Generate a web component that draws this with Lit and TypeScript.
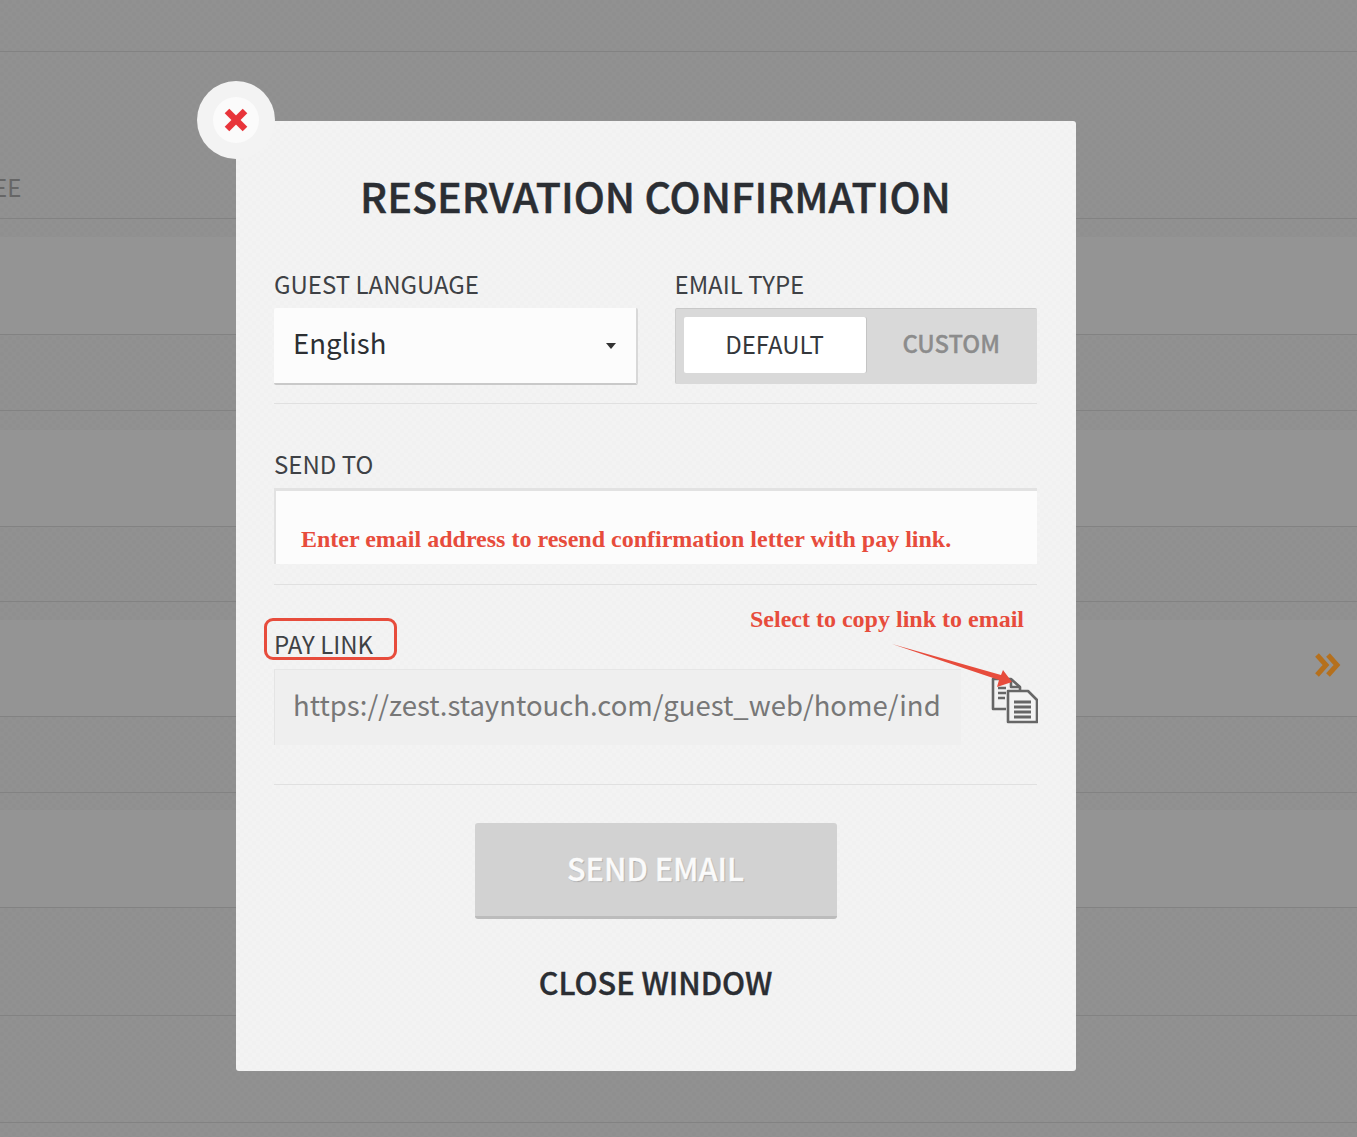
import { LitElement, html, css } from "lit";
import { customElement } from "lit/decorators.js";

const ROWS = [
  { h: 51, gap: 0, band: false, text: "" },
  { h: 166, gap: 0, band: false, text: "EE" },
  { h: 97, gap: 18, band: true, text: "" },
  { h: 75, gap: 0, band: false, text: "" },
  { h: 96, gap: 19, band: true, text: "" },
  { h: 74, gap: 0, band: false, text: "" },
  { h: 96, gap: 18, band: true, text: "", chev: true },
  { h: 75, gap: 0, band: false, text: "" },
  { h: 97, gap: 17, band: true, text: "" },
  { h: 107, gap: 0, band: false, text: "" },
  { h: 106, gap: 0, band: false, text: "" },
];

@customElement("app-root")
export class AppRoot extends LitElement {
  static styles = css`
    :host {
      display: block;
      position: relative;
      height: 1137px;
      overflow: hidden;
      background-color: #919191;
      background-image: radial-gradient(circle at 2px 2px, rgba(0,0,0,0.012) 2px, transparent 2.5px),
        radial-gradient(circle at 6px 6px, rgba(0,0,0,0.012) 2px, transparent 2.5px);
      background-size: 8px 8px;
      font-family: "Noto Sans CJK JP", "Noto Sans", sans-serif;
      color: #34373b;
    }
    .row { border-bottom: 1px solid #828282; position: relative; box-sizing: content-box; }
    .row.band { background: #949494; }
    .gap { display: block; }
    .row-text { position: absolute; left: -7px; top: 117px; font-size: 24px; line-height: 36px; color: #666; }
    .chev { position: absolute; left: 1314px; top: 32px; }
    .modal {
      position: absolute; left: 236px; top: 121px; width: 840px; height: 950px;
      box-sizing: border-box; padding: 0 39px 0 38px;
      background-color: #f3f3f3;
      background-image: radial-gradient(circle at 2px 2px, rgba(0,0,0,0.006) 2px, transparent 2.5px),
        radial-gradient(circle at 6px 6px, rgba(0,0,0,0.006) 2px, transparent 2.5px);
      background-size: 8px 8px;
      border-radius: 3px;
      display: flex; flex-direction: column;
    }
    .close {
      position: absolute; left: -39px; top: -40px; width: 78px; height: 78px; border-radius: 50%;
      background: #f3f3f3; display: flex; align-items: center; justify-content: center;
    }
    .close-in { width: 46px; height: 46px; border-radius: 50%; background: #fbfbfb; display: flex; align-items: center; justify-content: center; }
    h1 {
      margin: 42px 0 0; font-size: 41.3px; line-height: 64px; font-weight: 500; text-align: center; color: #2b2e33;
      font-family: "Noto Sans CJK JP", sans-serif; -webkit-text-stroke: 0.5px #2b2e33;
    }
    .two { display: flex; gap: 38px; margin-top: 40px; padding-bottom: 18px; border-bottom: 1px solid #e0e0e0; }
    .col { flex: 1 1 0; min-width: 0; }
    label { display: block; font-size: 24px; line-height: 34px; color: #3e4145; height: 36px; }
    .select {
      margin: 5px -1px 0 0; height: 77px; box-sizing: border-box; background: #fcfcfc; border-radius: 2px;
      border-bottom: 2px solid #c9c9c9; border-right: 2px solid #d8d8d8;
      display: flex; align-items: center; justify-content: space-between; padding: 0 20px 7px 19px;
      font-size: 27.5px; color: #2c2f33;
    }
    .caret { width: 0; height: 0; border-left: 5.5px solid transparent; border-right: 5.5px solid transparent; border-top: 6px solid #333; margin-top: 8px; }
    .toggle {
      margin-top: 5px; height: 76px; box-sizing: border-box; background: #d9d9d9; border-radius: 2px;
      padding: 8px 0 10px 8px; display: flex; border-top: 1px solid #c8c8c8; border-left: 1px solid #ccc;
    }
    .seg { flex: 0 0 182px; height: 56px; box-sizing: border-box; padding-bottom: 4px; display: flex; align-items: center; justify-content: center; font-size: 24px; border-radius: 2px; }
    .seg.on { background: #fff; color: #34373b; box-shadow: 1px 0 0 #c4c4c4; }
    .seg.off { flex: 1; font-weight: 500; font-size: 23.8px; color: #8c8c8c; padding-right: 0; padding-bottom: 6px; -webkit-text-stroke: 0.3px #8c8c8c; }
    .send { margin-top: 43px; padding-bottom: 20px; border-bottom: 1px solid #e0e0e0; }
    .input {
      margin-top: 5px; height: 76px; box-sizing: border-box; background: #fcfcfc;
      border-top: 3px solid #e2e2e2; border-left: 2px solid #e2e2e2; padding: 23px 0 0 25px;
      font: bold 24px/50px "Liberation Serif", serif; color: #e74c3c;
    }
    .pay { margin-top: 42px; padding-bottom: 39px; border-bottom: 1px solid #e0e0e0; }
    .payrow { display: flex; justify-content: space-between; align-items: flex-start; margin-top: 6px; }
    .link {
      width: 687px; height: 76px; box-sizing: border-box; background: #efefef; border-top: 1px solid #e6e6e6; border-left: 1px solid #e4e4e4;
      padding: 0 21px 0 18px; font-size: 27.5px; line-height: 68px; color: #777; overflow: hidden; white-space: nowrap;
    }
    .link-clip { overflow: hidden; }
    .copy { margin-top: 8px; margin-right: -1px; display: block; }
    .btn {
      align-self: center; margin-top: 38px; width: 362px; height: 96px; box-sizing: border-box;
      background: #d2d2d2; border-radius: 3px; border-bottom: 3px solid #bcbcbc; padding-bottom: 4px;
      display: flex; align-items: center; justify-content: center; font-size: 30.6px; font-weight: 500;
      color: #fafafa; text-shadow: 1px 1px 1px rgba(0,0,0,0.2); -webkit-text-stroke: 0.3px #fafafa;
    }
    .closew { margin-top: 38px; text-align: center; font-size: 30.6px; line-height: 50px; font-weight: 500; color: #2b2e33; -webkit-text-stroke: 0.4px #2b2e33; }
    .ring { position: absolute; left: 28px; top: 497px; width: 133px; height: 42px; box-sizing: border-box; border: 3px solid #e74c3c; border-radius: 9px; }
    .note { position: absolute; left: 514px; top: 482px; font: bold 24px/32px "Liberation Serif", serif; color: #e74c3c; white-space: nowrap; }
    .arrow { position: absolute; left: 656px; top: 518px; display: block; }
  `;

  render() {
    return html`
      ${ROWS.map((r) => html`
        ${r.gap ? html`<div class="gap" style="height:${r.gap}px"></div>` : ""}
        <div class="row ${r.band ? "band" : ""}" style="height:${r.h}px">
          ${r.text ? html`<span class="row-text">${r.text}</span>` : ""}
          ${r.chev ? html`
            <svg class="chev" width="28" height="26" viewBox="0 0 28 26" fill="none" stroke="#b5701d" stroke-width="5">
              <polyline points="3,3 12,13 3,23"></polyline>
              <polyline points="14,3 23,13 14,23"></polyline>
            </svg>` : ""}
        </div>`)}
      <div class="modal">
        <div class="close"><div class="close-in">
          <svg width="26" height="26" viewBox="0 0 26 26" fill="none" stroke="#e8343a" stroke-width="6.5">
            <line x1="4" y1="4" x2="22" y2="22"></line><line x1="22" y1="4" x2="4" y2="22"></line>
          </svg>
        </div></div>
        <h1>RESERVATION CONFIRMATION</h1>
        <div class="two">
          <div class="col">
            <label>GUEST LANGUAGE</label>
            <div class="select"><span>English</span><span class="caret"></span></div>
          </div>
          <div class="col">
            <label>EMAIL TYPE</label>
            <div class="toggle"><div class="seg on">DEFAULT</div><div class="seg off">CUSTOM</div></div>
          </div>
        </div>
        <div class="send">
          <label>SEND TO</label>
          <div class="input">Enter email address to resend confirmation letter with pay link.</div>
        </div>
        <div class="pay">
          <label>PAY LINK</label>
          <div class="payrow">
            <div class="link"><div class="link-clip">https://zest.stayntouch.com/guest_web/home/index</div></div>
            <svg class="copy" width="48" height="48" viewBox="0 0 48 48" fill="none" stroke="#666" stroke-width="2.6" stroke-linejoin="round">
              <path d="M16 32H3V2h18l9 8v6"></path>
              <path d="M21 2v8h9"></path>
              <path d="M8 11h8M8 16h8M8 21h7"></path>
              <path d="M18 14h20l9 9v22H18z" fill="#f3f3f3"></path>
              <path d="M24 25h17M24 30h17M24 35h17M24 40h17" stroke-width="3"></path>
            </svg>
          </div>
        </div>
        <div class="btn">SEND EMAIL</div>
        <div class="closew">CLOSE WINDOW</div>
        <div class="ring"></div>
        <div class="note">Select to copy link to email</div>
        <svg class="arrow" width="130" height="50" viewBox="892 639 130 50">
          <polygon points="892,644 1001,675 1003,670 1012,682 997,687 999,680" fill="#e74c3c"></polygon>
        </svg>
      </div>
    `;
  }
}
